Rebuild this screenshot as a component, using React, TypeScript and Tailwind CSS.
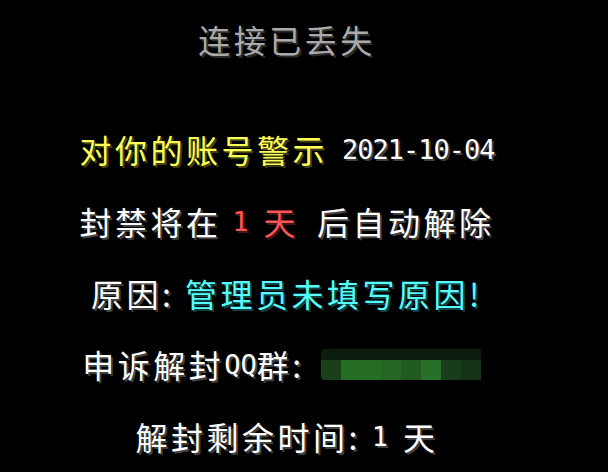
const cjk = "font-['Noto_Sans_CJK_SC','Noto_Sans_CJK_JP',sans-serif] text-[32px] tracking-[3.5px]"
const mono = "font-['DejaVu_Sans_Mono','Liberation_Mono',monospace] text-[27px] tracking-[-1px]"

const white = "text-white [text-shadow:2px_2px_0_#3f3f3f]"
const yellow = "text-[#ffff55] [text-shadow:2px_2px_0_#3f3f15]"
const red = "text-[#ff5555] [text-shadow:2px_2px_0_#3f1515]"
const aqua = "text-[#55ffff] [text-shadow:2px_2px_0_#153f3f]"

// blurred qq group number
const blocks = ["#1b3f1b", "#266e26", "#266e26", "#246624", "#205a20", "#26702a", "#193d19", "#153315"]

function Line({ children }: { children: React.ReactNode }) {
  return <div className="flex h-[72px] items-center whitespace-pre leading-none">{children}</div>
}

export default function App() {
  return (
    <div className="flex h-[472px] w-[608px] flex-col items-center bg-black pr-[34px]">
      <div className={`flex h-[78px] items-center leading-none text-[#aaaaaa] [text-shadow:2px_2px_0_#2a2a2a] ${cjk}`}>
        连接已丢失
      </div>
      <div className="h-[36px]" />
      <Line>
        <span className={`${cjk} ${yellow}`}>对你的账号警示</span>
        <span className={`${mono} ${white} ml-[14px]`}>2021-10-04</span>
      </Line>
      <Line>
        <span className={`${cjk} ${white}`}>封禁将在 </span>
        <span className={`${mono} ${red}`}>1</span>
        <span className={`${cjk} ${red} ml-[16px]`}>天</span>
        <span className={`${cjk} ${white} ml-[18px]`}>后自动解除</span>
      </Line>
      <Line>
        <span className={`${cjk} ${white}`}>原因: </span>
        <span className={`${cjk} ${aqua}`}>管理员未填写原因!</span>
      </Line>
      <Line>
        <span className={`${cjk} ${white}`}>申诉解封</span>
        <span className={`${mono} ${white} tracking-[0px]`}>QQ</span>
        <span className={`${cjk} ${white}`}>群:</span>
        <div className="mr-[11px] ml-[16px] flex h-[31px] w-[160px] flex-col overflow-hidden rounded-l-[4px]">
          <div className="h-[11px] bg-[#0c1c0c]" />
          <div className="flex h-[20px]">
            {blocks.map((c, i) => (
              <div key={i} className="h-full w-[20px]" style={{ backgroundColor: c }} />
            ))}
          </div>
        </div>
      </Line>
      <Line>
        <span className={`${cjk} ${white}`}>解封剩余时间: </span>
        <span className={`${mono} ${white}`}>1</span>
        <span className={`${cjk} ${white} ml-[16px]`}>天</span>
      </Line>
    </div>
  )
}
